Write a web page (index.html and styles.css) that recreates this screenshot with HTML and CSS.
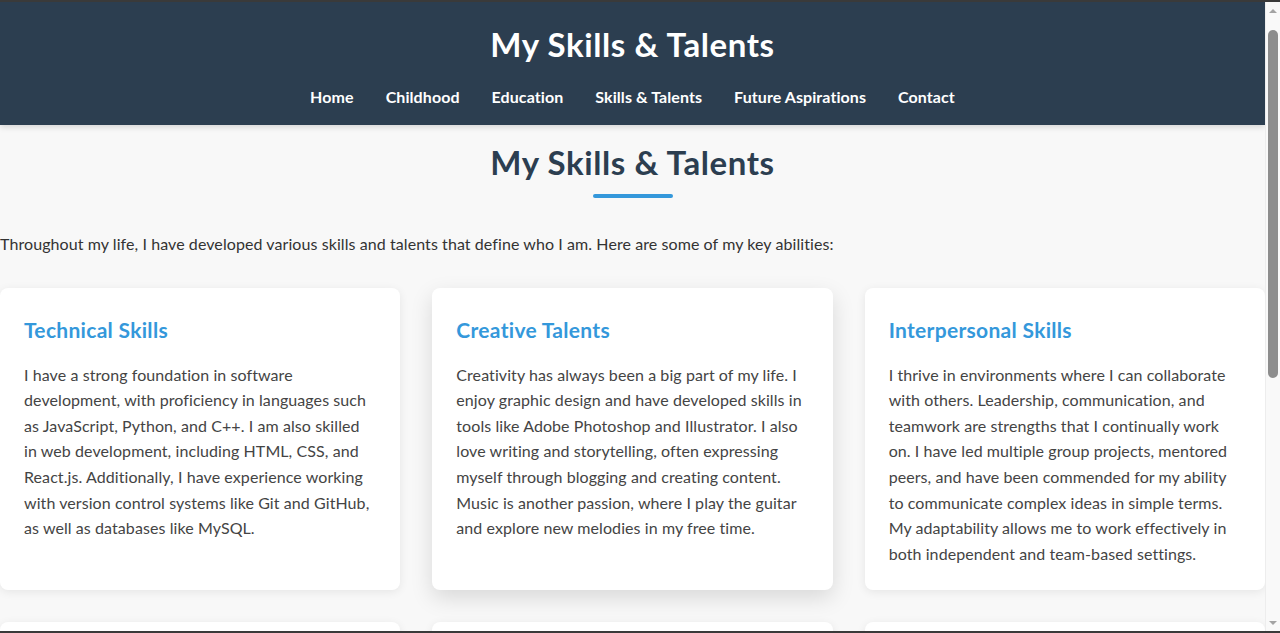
FILE: index.html
```html
<!DOCTYPE html>
<html lang="en">
<head>
<meta charset="utf-8">
<title>My Skills &amp; Talents</title>
<link rel="stylesheet" href="styles.css">
</head>
<body>
<div class="window">
  <div class="page">
    <header class="site-header">
      <h1 class="site-title">My Skills &amp; Talents</h1>
      <nav class="site-nav">
        <a href="#">Home</a>
        <a href="#">Childhood</a>
        <a href="#">Education</a>
        <a href="#">Skills &amp; Talents</a>
        <a href="#">Future Aspirations</a>
        <a href="#">Contact</a>
      </nav>
    </header>
    <main class="content">
      <h2 class="section-title">My Skills &amp; Talents</h2>
      <p class="intro">Throughout my life, I have developed various skills and talents that define who I am. Here are some of my key abilities:</p>
      <div class="cards">
        <section class="card">
          <h3>Technical Skills</h3>
          <p>I have a strong foundation in software development, with proficiency in languages such as JavaScript, Python, and C++. I am also skilled in web development, including HTML, CSS, and React.js. Additionally, I have experience working with version control systems like Git and GitHub, as well as databases like MySQL.</p>
        </section>
        <section class="card card-active">
          <h3>Creative Talents</h3>
          <p>Creativity has always been a big part of my life. I enjoy graphic design and have developed skills in tools like Adobe Photoshop and Illustrator. I also love writing and storytelling, often expressing myself through blogging and creating content. Music is another passion, where I play the guitar and explore new melodies in my free time.</p>
        </section>
        <section class="card">
          <h3>Interpersonal Skills</h3>
          <p>I thrive in environments where I can collaborate with others. Leadership, communication, and teamwork are strengths that I continually work on. I have led multiple group projects, mentored peers, and have been commended for my ability to communicate complex ideas in simple terms. My adaptability allows me to work effectively in both independent and team-based settings.</p>
        </section>
        <section class="card">
          <h3>Problem Solving</h3>
          <p>I enjoy breaking down complex challenges into manageable steps and finding creative, efficient solutions.</p>
        </section>
        <section class="card">
          <h3>Sports &amp; Fitness</h3>
          <p>Staying active is important to me. I enjoy playing football and running, which keep me disciplined and focused.</p>
        </section>
        <section class="card">
          <h3>Languages</h3>
          <p>I speak multiple languages, which helps me connect with people from different backgrounds and cultures.</p>
        </section>
      </div>
    </main>
  </div>
  <div class="scrollbar" aria-hidden="true">
    <div class="sb-btn"><span class="sb-arrow-up"></span></div>
    <div class="sb-track"><div class="sb-thumb"></div></div>
    <div class="sb-btn sb-btn-down"><span class="sb-arrow-down"></span></div>
  </div>
</div>
</body>
</html>
```

FILE: styles.css
```css
html, body {
  margin: 0;
  padding: 0;
  height: 100%;
  overflow: hidden;
}

body {
  font-family: Lato, "Open Sans", "Noto Sans", sans-serif;
  background: #3a3a3a;
  color: #333;
  font-size: 16px;
  letter-spacing: 0.08px;
  box-sizing: border-box;
  padding: 2px 0;
}

.window {
  display: flex;
  height: 100%;
}

.page {
  flex: 1;
  min-width: 0;
  height: 100%;
  overflow-y: auto;
  scrollbar-width: none;
  background: #f8f8f8;
}

.page::-webkit-scrollbar {
  display: none;
}

/* window scrollbar */
.scrollbar {
  width: 15px;
  flex: none;
  display: flex;
  flex-direction: column;
  background: #f9f9f9;
  border-left: 1px solid #ededed;
  box-sizing: border-box;
}

.sb-btn {
  height: 17px;
  display: flex;
  align-items: center;
  justify-content: center;
  flex: none;
}

.sb-arrow-up {
  width: 0;
  height: 0;
  border-left: 4px solid transparent;
  border-right: 4px solid transparent;
  border-bottom: 4px solid #a3a3a3;
}

.sb-arrow-down {
  width: 0;
  height: 0;
  border-left: 4px solid transparent;
  border-right: 4px solid transparent;
  border-top: 4px solid #a3a3a3;
}

.sb-track {
  flex: 1;
  padding: 11px 2px 0 2px;
}

.sb-thumb {
  height: 348px;
  background: #8d8d8d;
  border-radius: 5px;
}

.site-header {
  background: #2c3e50;
  color: #fff;
  text-align: center;
  padding: 22px 0 16px;
  box-shadow: 0 2px 6px rgba(0, 0, 0, 0.15);
  position: relative;
}

.site-title {
  margin: 0 0 21px;
  font-size: 33px;
  line-height: 40px;
  font-weight: 700;
  letter-spacing: 0.6px;
}

.site-nav {
  display: flex;
  justify-content: center;
  gap: 32px;
}

.site-nav a {
  color: #fff;
  text-decoration: none;
  font-weight: 700;
  font-size: 16px;
  line-height: 24px;
}

.content {
  padding: 17px 0 40px;
}

.section-title {
  margin: 0;
  text-align: center;
  color: #2c3e50;
  font-size: 33px;
  line-height: 40px;
  font-weight: 700;
  letter-spacing: 0.6px;
}

.section-title::after {
  content: "";
  display: block;
  width: 80px;
  height: 4px;
  margin: 12px auto 0;
  background: #3498db;
  border-radius: 2px;
}

.intro {
  margin: 33px 0 31px;
  line-height: 25.6px;
  color: #333;
}

.cards {
  display: grid;
  grid-template-columns: repeat(3, 1fr);
  gap: 32px;
}

.card {
  background: #fff;
  border-radius: 8px;
  padding: 24px;
  box-shadow: 0 2px 10px rgba(0, 0, 0, 0.08);
}

.card-active {
  box-shadow: 0 8px 22px rgba(0, 0, 0, 0.13);
}

.card h3 {
  margin: 4px 0 18px;
  color: #3498db;
  font-size: 21px;
  line-height: 28px;
  font-weight: 700;
  letter-spacing: 0.3px;
}

.card p {
  margin: 0;
  color: #444;
  line-height: 25.6px;
}
```
